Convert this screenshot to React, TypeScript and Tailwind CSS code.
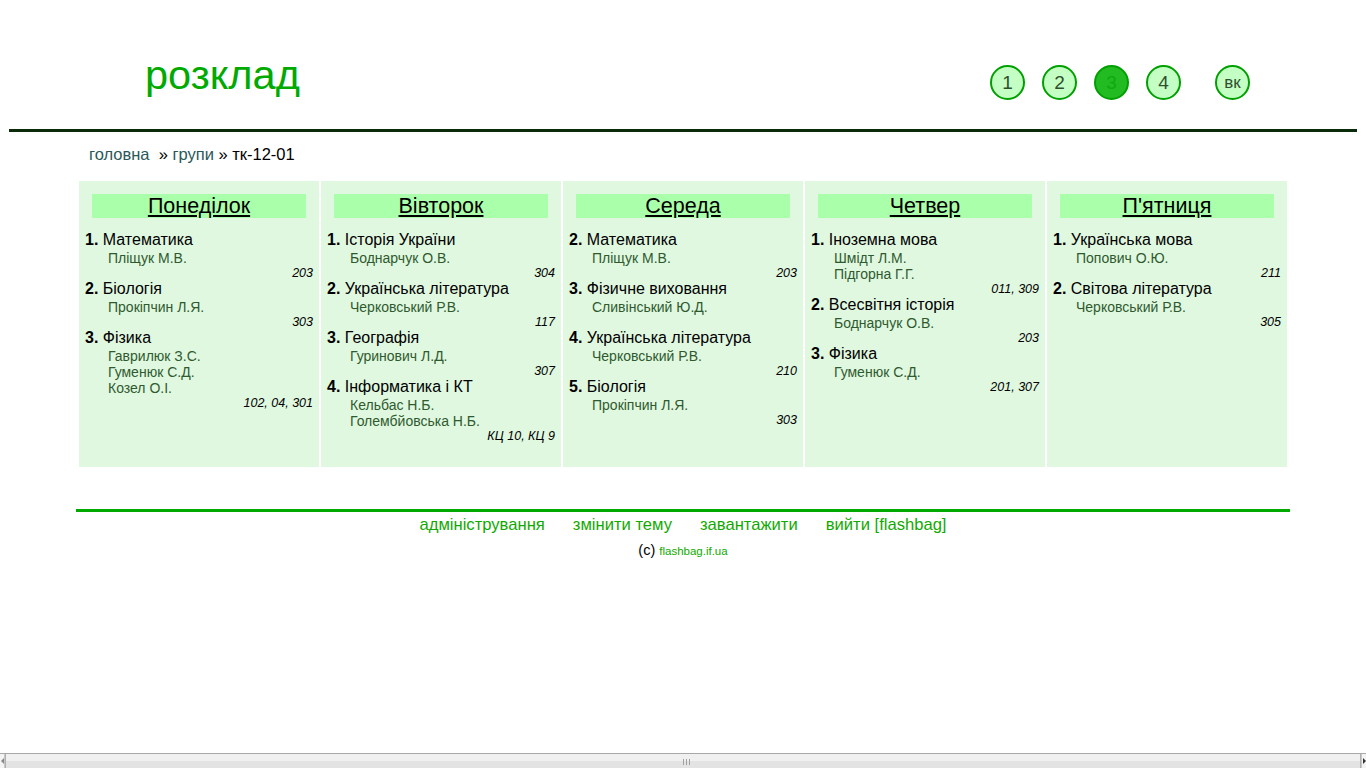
import React from "react";

type Lesson = { n: number; subject: string; teachers: string[]; room: string };
type Day = { name: string; lessons: Lesson[] };

const days: Day[] = [
  {
    name: "Понеділок",
    lessons: [
      { n: 1, subject: "Математика", teachers: ["Пліщук М.В."], room: "203" },
      { n: 2, subject: "Біологія", teachers: ["Прокіпчин Л.Я."], room: "303" },
      { n: 3, subject: "Фізика", teachers: ["Гаврилюк З.С.", "Гуменюк С.Д.", "Козел О.І."], room: "102, 04, 301" },
    ],
  },
  {
    name: "Вівторок",
    lessons: [
      { n: 1, subject: "Історія України", teachers: ["Боднарчук О.В."], room: "304" },
      { n: 2, subject: "Українська література", teachers: ["Черковський Р.В."], room: "117" },
      { n: 3, subject: "Географія", teachers: ["Гуринович Л.Д."], room: "307" },
      { n: 4, subject: "Інформатика і КТ", teachers: ["Кельбас Н.Б.", "Голембйовська Н.Б."], room: "КЦ 10, КЦ 9" },
    ],
  },
  {
    name: "Середа",
    lessons: [
      { n: 2, subject: "Математика", teachers: ["Пліщук М.В."], room: "203" },
      { n: 3, subject: "Фізичне виховання", teachers: ["Сливінський Ю.Д."], room: "" },
      { n: 4, subject: "Українська література", teachers: ["Черковський Р.В."], room: "210" },
      { n: 5, subject: "Біологія", teachers: ["Прокіпчин Л.Я."], room: "303" },
    ],
  },
  {
    name: "Четвер",
    lessons: [
      { n: 1, subject: "Іноземна мова", teachers: ["Шмідт Л.М.", "Підгорна Г.Г."], room: "011, 309" },
      { n: 2, subject: "Всесвітня історія", teachers: ["Боднарчук О.В."], room: "203" },
      { n: 3, subject: "Фізика", teachers: ["Гуменюк С.Д."], room: "201, 307" },
    ],
  },
  {
    name: "П'ятниця",
    lessons: [
      { n: 1, subject: "Українська мова", teachers: ["Попович О.Ю."], room: "211" },
      { n: 2, subject: "Світова література", teachers: ["Черковський Р.В."], room: "305" },
    ],
  },
];

function Circle({ label, active, small }: { label: string; active?: boolean; small?: boolean }) {
  return (
    <div
      className={
        active
          ? "w-[35px] h-[35px] rounded-full border-2 border-[#00a000] bg-[#22bb22] text-[#11a811] flex items-center justify-center text-[19px] leading-none"
          : small
          ? "w-[35px] h-[35px] rounded-full border-2 border-[#00a000] bg-[#c4ffc4] text-[#2f4f2f] flex items-center justify-center text-[17px] leading-none"
          : "w-[35px] h-[35px] rounded-full border-2 border-[#00a000] bg-[#c4ffc4] text-[#2f4f2f] flex items-center justify-center text-[19px] leading-none"
      }
    >
      {label}
    </div>
  );
}

export default function App() {
  return (
    <div className="bg-white text-black font-['Liberation_Sans',Arial,sans-serif]">
      <div className="w-[1366px]">
        {/* header */}
        <div className="h-[129px] flex">
          <div className="pl-[145px] pt-[51px] text-[41.5px] leading-[48px] text-[#00aa00]">розклад</div>
          <div className="ml-auto mr-[116px] pt-[65px] flex">
            <div className="flex gap-[17px]">
              <Circle label="1" />
              <Circle label="2" />
              <Circle label="3" active />
              <Circle label="4" />
            </div>
            <div className="ml-[34px]">
              <Circle label="вк" small />
            </div>
          </div>
        </div>
        <div className="ml-[9px] w-[1348px] h-[3px] bg-[#0a2a0a]" />

        {/* breadcrumb */}
        <div className="pl-[89px] pt-[13px] text-[16.5px] leading-[18px]">
          <span className="text-[#2a5858]">головна</span>
          <span>&nbsp; » </span>
          <span className="text-[#2a5858]">групи</span>
          <span> » тк-12-01</span>
        </div>

        {/* table */}
        <div className="ml-[79px] mt-[18px] flex gap-[2px]">
          {days.map((d) => (
            <div key={d.name} className="w-[240px] bg-[#e0f8e0] pt-[13px] pb-[25px]">
              <div className="mx-[13px] h-[24px] bg-[#aaffaa] text-center text-[21.5px] leading-[24px] underline underline-offset-2">
                {d.name}
              </div>
              <div className="mt-[12px] px-[6px]">
                {d.lessons.map((l, i) => (
                  <div key={i}>
                    <div className="text-[16px] leading-[20px]">
                      <b>{l.n}.</b> {l.subject}
                    </div>
                    {l.teachers.map((t) => (
                      <div key={t} className="pl-[23px] text-[14px] leading-[16px] text-[#2f5a2f]">
                        {t}
                      </div>
                    ))}
                    <div className="text-right italic text-[12.5px] leading-[15px] h-[13px]">{l.room}</div>
                  </div>
                ))}
              </div>
            </div>
          ))}
        </div>

        {/* footer */}
        <div className="ml-[76px] mt-[42px] w-[1214px] h-[3px] bg-[#00aa00]" />
        <div className="flex justify-center gap-[28px] pt-[4px] text-[16.6px] leading-[18px] text-[#11aa00]">
          <span>адміністрування</span>
          <span>змінити тему</span>
          <span>завантажити</span>
          <span>вийти [flashbag]</span>
        </div>
        <div className="flex justify-center items-baseline pt-[8px] text-[14.5px] leading-[16px]">
          <span>(c)</span>
          <span className="ml-[4px] text-[11.5px] text-[#11aa00]">flashbag.if.ua</span>
        </div>
        <div className="h-[190px]" />
      </div>

      {/* horizontal scrollbar (browser chrome overlay) */}
      <div className="fixed left-0 right-0 bottom-0 h-[15px] flex border-t border-[#a8a8a8] bg-[#e8e8e8]">
        <div className="w-[5px] h-full flex items-center justify-center border-r border-[#c8c8c8] bg-[#f4f4f4]">
          <div className="w-0 h-0 border-y-[3px] border-y-transparent border-r-[3px] border-r-[#888888]" />
        </div>
        <div className="flex-1 h-full flex flex-col border-x border-[#b0b0b0]">
          <div className="flex-1 bg-[#f0f0f0] relative">
            <div className="absolute left-1/2 top-[5px] flex gap-[2px]">
              <div className="w-px h-[6px] bg-[#a0a0a0]" />
              <div className="w-px h-[6px] bg-[#a0a0a0]" />
              <div className="w-px h-[6px] bg-[#a0a0a0]" />
            </div>
          </div>
          <div className="flex-1 bg-[#e3e3e3]" />
        </div>
        <div className="w-[5px] h-full flex items-center justify-center border-l border-[#c8c8c8] bg-[#f4f4f4]">
          <div className="w-0 h-0 border-y-[3px] border-y-transparent border-l-[3px] border-l-[#333333]" />
        </div>
      </div>
    </div>
  );
}
